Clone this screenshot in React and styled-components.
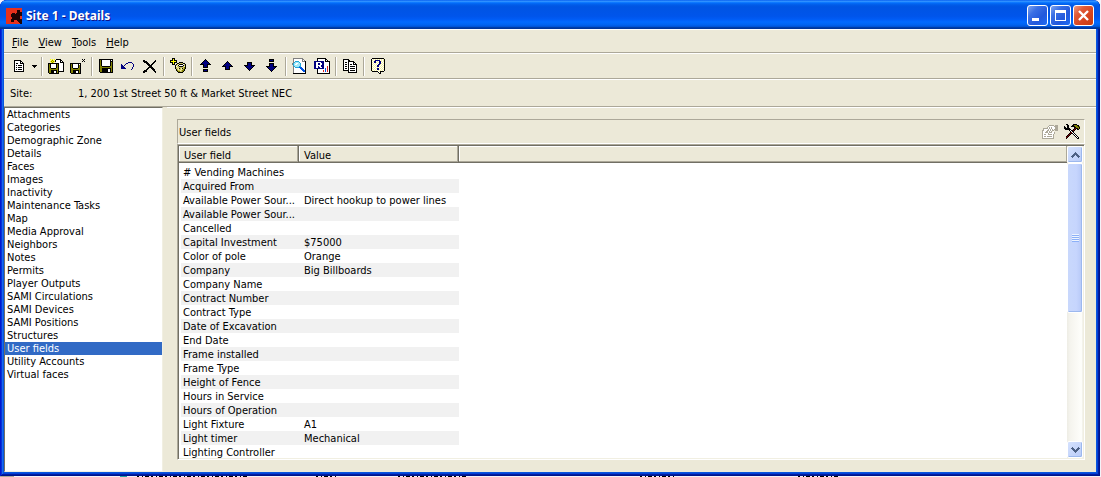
import React, { useState } from 'react';
import styled, { createGlobalStyle, css } from 'styled-components';

const sections = [
  'Attachments', 'Categories', 'Demographic Zone', 'Details', 'Faces', 'Images',
  'Inactivity', 'Maintenance Tasks', 'Map', 'Media Approval', 'Neighbors', 'Notes',
  'Permits', 'Player Outputs', 'SAMI Circulations', 'SAMI Devices', 'SAMI Positions',
  'Structures', 'User fields', 'Utility Accounts', 'Virtual faces',
];

const fields = [
  ['# Vending Machines', ''],
  ['Acquired From', ''],
  ['Available Power Sour...', 'Direct hookup to power lines'],
  ['Available Power Sour...', ''],
  ['Cancelled', ''],
  ['Capital Investment', '$75000'],
  ['Color of pole', 'Orange'],
  ['Company', 'Big Billboards'],
  ['Company Name', ''],
  ['Contract Number', ''],
  ['Contract Type', ''],
  ['Date of Excavation', ''],
  ['End Date', ''],
  ['Frame installed', ''],
  ['Frame Type', ''],
  ['Height of Fence', ''],
  ['Hours in Service', ''],
  ['Hours of Operation', ''],
  ['Light Fixture', 'A1'],
  ['Light timer', 'Mechanical'],
  ['Lighting Controller', ''],
];

// one letter per pixel, a dot is transparent
const palette = {
  k: '#000000', w: '#ffffff', o: '#808000', y: '#ffff00', n: '#000080', g: '#808080',
  s: '#aca899', r: '#800000', R: '#e02020', c: '#a0e8f8', t: '#20a8d8', b: '#0054e3',
  d: '#4d6185', l: '#f4f0a0', m: '#c8c060',
};

const icons = {
  page: [
    '', '',
    '...kkkkkkk',
    '...kwwwwwkk',
    '...kwwwwwkwk',
    '...kwkkwwkkkk',
    '...kwwwwwwwwk',
    '...kwkwkkkkwk',
    '...kwwwwwwwwk',
    '...kwkwkkkkwk',
    '...kwwwwwwwwk',
    '...kwkwkkkkwk',
    '...kwwwwwwwwk',
    '...kkkkkkkkkk',
  ],
  saveNew: [
    '',
    '..y.y.y.kkkkk',
    '...yoy.kwwwwkk',
    '..yoyoykwwwwkwk',
    '...yoy..wwwwkkkk',
    'kkkkkkkkkkkwwwwk',
    'kokwwwwwkokwwwwk',
    'kokwwwwwkokwwwwk',
    'kokwwwwwkokwwwwk',
    'kokwwwwwkokwwwwk',
    'kookkkkkookwwwwk',
    'koooooooookwwwwk',
    'kookkkkkkokwwwwk',
    'kookkkwwkokkkkkk',
    'kookkkwwkok',
    '.kkkkkkkkkk',
  ],
  saveClose: [
    '',
    '............k.k',
    '.............k',
    '............k.k',
    '',
    'kkkkkkkkkkk',
    'kokwwwwwkwk',
    'kokwwwwwkok',
    'kokwwwwwkok',
    'kokwwwwwkok',
    'kookkkkkook',
    'koooooooook',
    'kookkkkkkok',
    'kookkkwwkok',
    'kookkkwwkok',
    '.kkkkkkkkkk',
  ],
  save: [
    '',
    '.kkkkkkkkkkkkkk',
    '.kokwwwwwwwwkwk',
    '.kokwwwwwwwwkkk',
    '.kokwwwwwwwwkok',
    '.kokwwwwwwwwkok',
    '.kokwwwwwwwwkok',
    '.kokwwwwwwwwkok',
    '.kookkkkkkkkook',
    '.kooooooooooook',
    '.kookkkkkkkkkok',
    '.kookkkkkkwwkok',
    '.kookkkkkkwwkok',
    '.kookkkkkkwwkok',
    '..kkkkkkkkkkkkk',
  ],
  undo: [
    '', '', '', '',
    '........nnnn',
    '......nn....n',
    '.n...n.......n',
    '.nn.n........n',
    '.nnn.........n',
    '.nnnn.......n',
    '.nnnnn......n',
    '...........n',
  ],
  remove: [
    '', '',
    '.kk..........k',
    '.kkkk.......kk',
    '..kkkk.....kk',
    '....kkk...kk',
    '.....kkk.kk',
    '......kkkk',
    '.......kkk',
    '......kkkkk',
    '.....kk..kkk',
    '....kk....kkk',
    '..kkk......kk',
    '.kkkk.......kk',
    '.kk..........k',
  ],
  addFace: [
    '..kkk',
    '..kyk',
    'kkkykkk',
    'kyyyyyk',
    'kkkykkk..kkkk',
    '..kyk..kkmmmmkk',
    '..kkk.kmlkkkkwmk',
    '.....kmlkwwwwkmk',
    '.....kwmmkkkkmlk',
    '.....kmlmmmmmmok',
    '.....kmmlkmlkmok',
    '......kmlmmlmok',
    '......kommlmook',
    '.......koommok',
    '........kkkkk',
  ],
  moveTop: [
    '',
    '.......k',
    '......knk',
    '.....knnnk',
    '....knnnnnk',
    '...knnnnnnnk',
    '..kkkknnnkkkk',
    '.....knnnk',
    '.....knnnk',
    '.....kkkkk',
    '',
    '.....kkkkk',
    '.....knnnk',
    '.....kkkkk',
  ],
  moveUp: [
    '', '', '',
    '.......k',
    '......knk',
    '.....knnnk',
    '....knnnnnk',
    '...knnnnnnnk',
    '..kkkknnnkkkk',
    '.....knnnk',
    '.....knnnk',
    '.....kkkkk',
  ],
  moveDown: [
    '', '', '', '',
    '.....kkkkk',
    '.....knnnk',
    '.....knnnk',
    '..kkkknnnkkkk',
    '...knnnnnnnk',
    '....knnnnnk',
    '.....knnnk',
    '......knk',
    '.......k',
  ],
  moveBottom: [
    '',
    '.....kkkkk',
    '.....knnnk',
    '.....kkkkk',
    '',
    '.....kkkkk',
    '.....knnnk',
    '.....knnnk',
    '..kkkknnnkkkk',
    '...knnnnnnnk',
    '....knnnnnk',
    '.....knnnk',
    '......knk',
    '.......k',
  ],
  preview: [
    '.gggggggggg',
    '.gwwwwwwwwgg',
    '.gwwwwwwwwgwg',
    '.gwttttwwwgggk',
    '.gtcccctwwwwwk',
    'gtccwwcctwwwwk',
    'gtcwwccctwwwwk',
    '.tcccccctwwwwk',
    '.gtccccttwwwwk',
    '.gwttttbbbwwwk',
    '.gwwwwwwbbbwwk',
    '.gwwwwwwwbbbwk',
    '.gwwwwwwwwbbbk',
    '.gwwwwwwwwwbbk',
    '.gwwwwwwwwwwwk',
    '.kkkkkkkkkkkkk',
  ],
  report: [
    '...kkkkkkkkk',
    '...kwwwwwwwkk',
    '...kwwwwwwwkwk',
    'nnnnnnnnnnwkkkkk',
    'nnwwwwwnnnwwwwwk',
    'nnwwnnwwnnwwwwwk',
    'nnwwnnwwnnwwwwwk',
    'nnwwwwwnnnwwwwwk',
    'nnwwnwwnnnwwwRwk',
    'nnwwnnwwnnwwwRwk',
    'nnnnnnnnnnwbwRwk',
    '...kwwwwwwwbwRwk',
    '...kwwwwwRwbwRwk',
    '...kwwwwwRwbwRwk',
    '...kwwwwwwwwwwwk',
    '...kkkkkkkkkkkkk',
  ],
  copy: [
    '',
    '.kkkkkk',
    '.kwwwwkk',
    '.kwwwwkkkkkk',
    '.kwkkwkwwwwkk',
    '.kwwwwkwwwwkwk',
    '.kwkkwkwkkwkkkk',
    '.kwwwwkwwwwwwwk',
    '.kwkkwkwkkkkkwk',
    '.kwwwwkwwwwwwwk',
    '.kwkkwkwkkkkkwk',
    '.kwwwwkwwwwwwwk',
    '.kkkkkkwkkkkkwk',
    '......kwwwwwwwk',
    '......kkkkkkkkk',
  ],
  help: [
    '..kkkkkkkkkkkk',
    '.kwlwlwlwlwlwlk',
    '.klwlnnnnnwlwlk',
    '.kwlnnwlwnnlwlk',
    '.klwnnlwlnnwlwk',
    '.kwlwlwlwnnlwlk',
    '.klwlwlwnnlwlwk',
    '.kwlwlwnnlwlwlk',
    '.klwlwlnnwlwlwk',
    '.kwlwlwlwlwlwlk',
    '.klwlwlnnwlwlwk',
    '.kwlwlwnnlwlwlk',
    '.klwlwlwlwlwlwk',
    '..kkkkkkwlkkkk',
    '........kwk',
    '.........kk',
  ],
  properties: [
    '',
    '.......sssss.sss',
    '......swwwwwssss',
    '.....swswswwwsss',
    '.ssssswswswwwsss',
    '.swwwwswswswssss',
    'sswwwsswswss.sss',
    'swwwsswsws.w',
    'swwssswssswws',
    'swwwwwswwwwws',
    'swsswwssssws',
    'swwwwwwwwwws',
    'swsswsssssws',
    'swwwwwwwwwws',
    'ssssssssssss',
  ],
  tools: [
    '..kk.....kkkk',
    '...kk...kkoookk',
    'k..kk..kkkkoooko',
    'kk.kk.....kkoook',
    'kkkkkk....krkkok',
    '.kkkkkk..krk.kk',
    '.....kwkkrk',
    '......kwkk',
    '......krwk',
    '.....krkkwk',
    '....krk..kwk',
    '...krk....kwk',
    '..krk......kwk',
    '..rk........kwk',
    '..k..........kk',
  ],
  app: [
    'RRRRRRRRRRRRRRRR',
    'RRRRRRRRRRRRRRRR',
    'RRRRRRRRRRRkkkRR',
    'RRRRRRRRRRRkkkRR',
    'RRRRRRRRRRRkkkkk',
    'RRRRRRkkkRkkkkkk',
    'RRRRRkkkkkkkkkkk',
    'RRRRRkkkkkkkkkkk',
    'RRRRRkkkkkkkkkRR',
    'RRRRRRkkkkkkkkRR',
    'RRRRRRkkkkkkkkRR',
    'RRRRRkkkkkkkkkkk',
    'RRRRRkkkRRRkkkkk',
    'RRRRRkkkRRRRkkkk',
    'RRRRRRRRRRRRRkkk',
    'RRRRRRRRRRRRRRkk',
  ],
  chevronUp: [
    '....d',
    '...ddd',
    '..ddddd',
    '.ddd.ddd',
    'ddd...ddd',
    '.d.....d',
  ],
  chevronDown: [
    '.d.....d',
    'ddd...ddd',
    '.ddd.ddd',
    '..ddddd',
    '...ddd',
    '....d',
  ],
  caret: ['kkkkk', '.kkk', '..k'],
};

const PixelIcon = ({ name, width = 16, height = 16, colors = palette }) => (
  <svg width={width} height={height} viewBox={`0 0 ${width} ${height}`} shapeRendering="crispEdges" aria-hidden="true">
    {icons[name].map((row, y) =>
      [...row].map((p, x) => (colors[p] ? <rect key={`${x}-${y}`} x={x} y={y} width="1" height="1" fill={colors[p]} /> : null))
    )}
  </svg>
);

const toolbar = [
  [['page', 'New']],
  [['saveNew', 'Save and new'], ['saveClose', 'Save and close']],
  [['save', 'Save'], ['undo', 'Undo'], ['remove', 'Delete']],
  [['addFace', 'Add']],
  [['moveTop', 'First'], ['moveUp', 'Previous'], ['moveDown', 'Next'], ['moveBottom', 'Last']],
  [['preview', 'Preview'], ['report', 'Report']],
  [['copy', 'Copy']],
  [['help', 'Help']],
];

const App = () => {
  const [active, setActive] = useState('User fields');

  return (
    <Desktop>
      <GlobalStyle />
      <Window>
        <TitleBar>
          <PixelIcon name="app" colors={{ k: '#200404', R: '#e8301c' }} />
          <Title>Site 1 - Details</Title>
          <CaptionButton aria-label="Minimize">
            <svg width="19" height="19"><path d="M4 12h7v3H4z" fill="#fff" /></svg>
          </CaptionButton>
          <CaptionButton aria-label="Maximize">
            <svg width="19" height="19"><path d="M4 4h11v11H4zM5 7v7h9V7z" fill="#fff" fillRule="evenodd" /></svg>
          </CaptionButton>
          <CaptionButton $close aria-label="Close">
            <svg width="19" height="19"><path d="M5 5l9 9M14 5l-9 9" stroke="#fff" strokeWidth="2.4" /></svg>
          </CaptionButton>
        </TitleBar>

        <Client>
          <MenuBar>
            {['File', 'View', 'Tools', 'Help'].map((item) => (
              <MenuItem key={item}><u>{item[0]}</u>{item.slice(1)}</MenuItem>
            ))}
          </MenuBar>

          <Toolbar>
            {toolbar.map((group, i) => (
              <ToolGroup key={i}>
                {group.map(([icon, label]) => (
                  <ToolButton key={icon} aria-label={label}><PixelIcon name={icon} /></ToolButton>
                ))}
                {i === 0 && (
                  <DropButton aria-label="New options"><PixelIcon name="caret" width={5} height={3} /></DropButton>
                )}
              </ToolGroup>
            ))}
          </Toolbar>

          <SiteBar>
            <SiteLabel>Site:</SiteLabel>
            <span>1, 200 1st Street 50 ft &amp; Market Street NEC</span>
          </SiteBar>

          <Body>
            <Sections>
              {sections.map((name) => (
                <li key={name}>
                  <SectionButton $active={name === active} onClick={() => setActive(name)}>{name}</SectionButton>
                </li>
              ))}
            </Sections>

            <Panel>
              <PanelHeader>
                <PanelTitle>User fields</PanelTitle>
                <ToolButton aria-label="Properties" disabled><PixelIcon name="properties" /></ToolButton>
                <ToolButton aria-label="Customize"><PixelIcon name="tools" /></ToolButton>
              </PanelHeader>

              <Grid>
                <TableArea>
                  <Table>
                    <colgroup>
                      <Column $width="120px" />
                      <Column $width="160px" />
                      <Column />
                    </colgroup>
                    <thead>
                      <tr>
                        <HeadCell>User field</HeadCell>
                        <HeadCell>Value</HeadCell>
                        <HeadCell $filler />
                      </tr>
                    </thead>
                    <tbody>
                      {fields.map(([field, value], i) => (
                        <Row key={i}>
                          <Cell>{field}</Cell>
                          <Cell>{value}</Cell>
                        </Row>
                      ))}
                    </tbody>
                  </Table>
                </TableArea>
                <ScrollBar>
                  <ScrollButton aria-label="Scroll up"><PixelIcon name="chevronUp" width={9} height={6} /></ScrollButton>
                  <ScrollTrack><ScrollThumb><Grip /></ScrollThumb></ScrollTrack>
                  <ScrollButton aria-label="Scroll down"><PixelIcon name="chevronDown" width={9} height={6} /></ScrollButton>
                </ScrollBar>
              </Grid>
            </Panel>
          </Body>
        </Client>
      </Window>
      {/* sliver of the window underneath */}
      <svg width="100%" height="1" shapeRendering="crispEdges" aria-hidden="true">
        <path d="M0 .5h14" stroke="#aca899" />
        <path d="M120 .5h7" stroke="#20a0a0" />
        <path d="M137 .5h110M316 .5h22M398 .5h68M640 .5h36M798 .5h42" stroke="#000" strokeDasharray="2 3 1 2 4 2" />
      </svg>
    </Desktop>
  );
};

export default App;

const GlobalStyle = createGlobalStyle`
  * {
    box-sizing: border-box;
  }
  body {
    margin: 0;
    font-family: "DejaVu Sans Condensed", "DejaVu Sans", sans-serif;
    font-size: 11px;
    line-height: 13px;
    color: #000;
  }
  button {
    font: inherit;
    color: inherit;
    padding: 0;
    border: 0;
    background: none;
  }
  svg {
    display: block;
  }
`;

const Desktop = styled.div`
  height: 100vh;
  padding-right: 1px;
  display: flex;
  flex-direction: column;
  background: #f4f2f8;
`;

const Window = styled.div`
  flex: 1;
  min-height: 0;
  display: flex;
  flex-direction: column;
  padding: 0 4px 4px;
  border-radius: 7px 7px 0 0;
  background: #0855dd;
  box-shadow: inset 1px 0 #0019cf, inset -1px -1px #00138c, inset 2px 0 #0831d9, inset -2px -2px #001ea0, inset 3px 0 #166aee, inset -3px -3px #0441d8;
  overflow: hidden;
`;

const TitleBar = styled.header`
  flex: none;
  height: 29px;
  margin: 0 -4px;
  padding: 2px 6px 0;
  display: flex;
  align-items: center;
  gap: 2px;
  background: linear-gradient(#0058ee 0, #3593ff 4%, #288eff 6%, #127dff 8%, #036ffc 10%, #0262ee 14%, #0057e5 20%, #0054e3 24%, #0055eb 56%, #005bf5 66%, #026afe 76%, #0062ef 86%, #0052d6 92%, #0040ab 94%, #003092 100%);
`;

const Title = styled.h1`
  flex: 1;
  margin: 0 0 0 2px;
  font-family: "Noto Sans", sans-serif;
  font-size: 12px;
  font-weight: 700;
  line-height: 16px;
  color: #fff;
  text-shadow: 1px 1px #0f1089;
`;

const CaptionButton = styled.button`
  width: 21px;
  height: 21px;
  && {
    border: 1px solid #fff;
  }
  border-radius: 3px;
  background: linear-gradient(135deg, #7fa5f0, #3a6fe4 30%, #2258dc 65%, #1d6cf5);
  ${(props) => props.$close && css`
    background: linear-gradient(135deg, #f09a80, #e05a38 30%, #d6431e 65%, #c83c10);
  `}
`;

const Client = styled.main`
  flex: 1;
  min-height: 0;
  display: flex;
  flex-direction: column;
  background: #ece9d8;
`;

const bevel = css`
  border-top: 1px solid #fff;
  border-bottom: 1px solid #aca899;
`;

const MenuBar = styled.nav`
  ${bevel}
  height: 24px;
  padding: 2px 8px 0;
  display: flex;
  align-items: center;
  gap: 10px;
`;

const MenuItem = styled.button`
  line-height: 15px;
`;

const Toolbar = styled.div`
  ${bevel}
  height: 26px;
  padding: 0 4px;
  display: flex;
  align-items: center;
`;

const ToolGroup = styled.div`
  display: flex;
  align-items: center;

  & + &::before {
    content: '';
    height: 19px;
    margin: 0 2px;
    border-left: 1px solid #aca899;
    border-right: 1px solid #fff;
  }
`;

const ToolButton = styled.button`
  width: 22px;
  height: 22px;
  display: flex;
  align-items: center;
  justify-content: center;
`;

const DropButton = styled.button`
  width: 9px;
  height: 22px;
  display: flex;
  align-items: center;
  justify-content: center;
`;

const SiteBar = styled.div`
  ${bevel}
  height: 28px;
  padding: 0 6px;
  display: flex;
  align-items: center;
`;

const SiteLabel = styled.span`
  width: 68px;
`;

const Body = styled.div`
  flex: 1;
  min-height: 0;
  display: flex;
  gap: 4px;
`;

const Sections = styled.ul`
  flex: none;
  width: 159px;
  margin: 0;
  padding: 0;
  list-style: none;
  background: #fff;
  border: 1px solid;
  border-color: #716f64 #f1efe2 #f1efe2 #716f64;
`;

const SectionButton = styled.button`
  display: block;
  width: 100%;
  height: 13px;
  && {
    padding: 1px 2px 0;
    line-height: 12px;
  }
  text-align: left;
  background: ${(props) => (props.$active ? '#316ac5' : '#fff')};
  color: ${(props) => (props.$active ? '#fff' : '#000')};
`;

const Panel = styled.section`
  flex: 1;
  min-width: 0;
  display: flex;
  flex-direction: column;
  padding: 11px 11px 12px 10px;
  border-top: 1px solid #fff;
`;

const PanelHeader = styled.div`
  height: 25px;
  padding: 0 1px;
  display: flex;
  align-items: center;
  border: 1px solid;
  border-color: #aca899 #fff #fff #aca899;
`;

const PanelTitle = styled.h2`
  flex: 1;
  margin: 0;
  padding-top: 1px;
  font-size: 11px;
  font-weight: 400;
`;

const Grid = styled.div`
  flex: 1;
  min-height: 0;
  display: flex;
  background: #fff;
  border: 1px solid;
  border-color: #aca899 #fff #fff #aca899;
  box-shadow: inset 1px 1px #716f64, inset -1px -1px #f1efe2;
  padding: 1px;
`;

const TableArea = styled.div`
  flex: 1;
  min-width: 0;
  overflow: hidden;
`;

const Table = styled.table`
  width: 100%;
  table-layout: fixed;
  border-spacing: 0;

  thead::after {
    content: '';
    display: block;
    height: 2px;
  }
`;

const Column = styled.col`
  width: ${(props) => props.$width || 'auto'};
`;

const HeadCell = styled.th`
  height: 17px;
  padding: 2px 5px 0;
  font-weight: 400;
  text-align: left;
  background: #ece9d8;
  border-right: 1px solid #716f64;
  border-bottom: 1px solid #716f64;
  box-shadow: inset -1px -1px #aca899, inset 1px 1px #fff;
  ${(props) => props.$filler && css`
    border-right: 0;
  `}
`;

const Cell = styled.td`
  height: 14px;
  padding: 0 0 0 5px;
  white-space: nowrap;

  &:first-child {
    padding-left: 2px;
    border-left: 2px solid #fff;
  }
`;

const Row = styled.tr`
  &:nth-child(even) ${Cell} {
    background: #f1f1f1;
  }
`;

const ScrollBar = styled.div`
  flex: none;
  width: 16px;
  display: flex;
  flex-direction: column;
  background: linear-gradient(to right, #eeede5, #f5f4ee 20%, #fefefb 90%, #eeede5);
`;

const face = css`
  border: 1px solid #fff;
  border-radius: 2px;
  background: linear-gradient(135deg, #d5e2fe, #b9cbf8);
  box-shadow: inset -1px -1px #9cb8ee;
`;

const ScrollButton = styled.button`
  && {
    ${face}
  }
  height: 17px;
  display: flex;
  align-items: center;
  justify-content: center;
`;

const ScrollTrack = styled.div`
  flex: 1;
`;

const ScrollThumb = styled.div`
  ${face}
  height: 54%;
  background: linear-gradient(to right, #c9d8fc, #c6d5fd 60%, #b6c8f7);
  display: flex;
  align-items: center;
  justify-content: center;
`;

const Grip = styled.div`
  width: 7px;
  height: 8px;
  background: repeating-linear-gradient(#eef4fe 0 1px, #8cb0f8 1px 2px);
`;
